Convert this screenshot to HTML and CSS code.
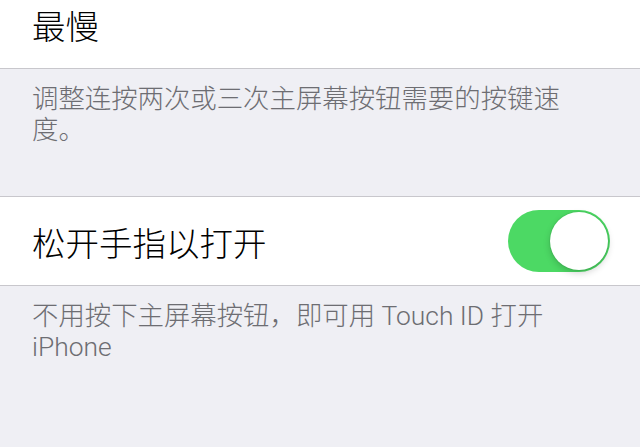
FILE: index.html
```html
<!DOCTYPE html>
<html lang="zh-CN">
<head>
<meta charset="utf-8">
<link rel="stylesheet" href="styles.css">
</head>
<body>
<div class="screen">
  <div class="group first">
    <div class="cell"><span class="label">最慢</span></div>
  </div>
  <div class="footer">调整连按两次或三次主屏幕按钮需要的按键速度。</div>
  <div class="group">
    <div class="cell">
      <span class="label">松开手指以打开</span>
      <span class="switch on"><span class="knob"></span></span>
    </div>
  </div>
  <div class="footer">不用按下主屏幕按钮，即可用 Touch ID 打开 iPhone</div>
</div>
</body>
</html>
```

FILE: styles.css
```css
html, body {
  margin: 0;
  padding: 0;
  background: #efeff4;
}
.screen {
  width: 640px;
  height: 447px;
  overflow: hidden;
  background: #efeff4;
  font-family: "Liberation Sans", "Noto Sans CJK SC", sans-serif;
}
.group {
  background: #fff;
  border-bottom: 1px solid #c8c7cc;
  border-top: 1px solid #c8c7cc;
}
.group.first {
  border-top: none;
  margin-top: -20px;
}
.cell {
  height: 88px;
  display: flex;
  align-items: center;
  justify-content: space-between;
  padding: 0 30px 0 32px;
}
.label {
  font-size: 33.5px;
  font-weight: 300;
  color: #000;
}
.footer {
  font-family: Roboto, "Noto Sans CJK SC", sans-serif;
  font-size: 26.4px;
  font-weight: 300;
  line-height: 31px;
  color: #6d6d72;
  padding: 15px 64px 50px 32px;
}
.switch {
  width: 102px;
  height: 62px;
  border-radius: 31px;
  background: #4cd964;
  display: flex;
  align-items: center;
  justify-content: flex-end;
  padding: 0 2px;
  box-sizing: border-box;
}
.knob {
  width: 58px;
  height: 58px;
  border-radius: 50%;
  background: #fff;
  box-shadow: 0 3px 7px rgba(0,0,0,0.18), 0 0 0 1px rgba(0,0,0,0.05);
}
```
